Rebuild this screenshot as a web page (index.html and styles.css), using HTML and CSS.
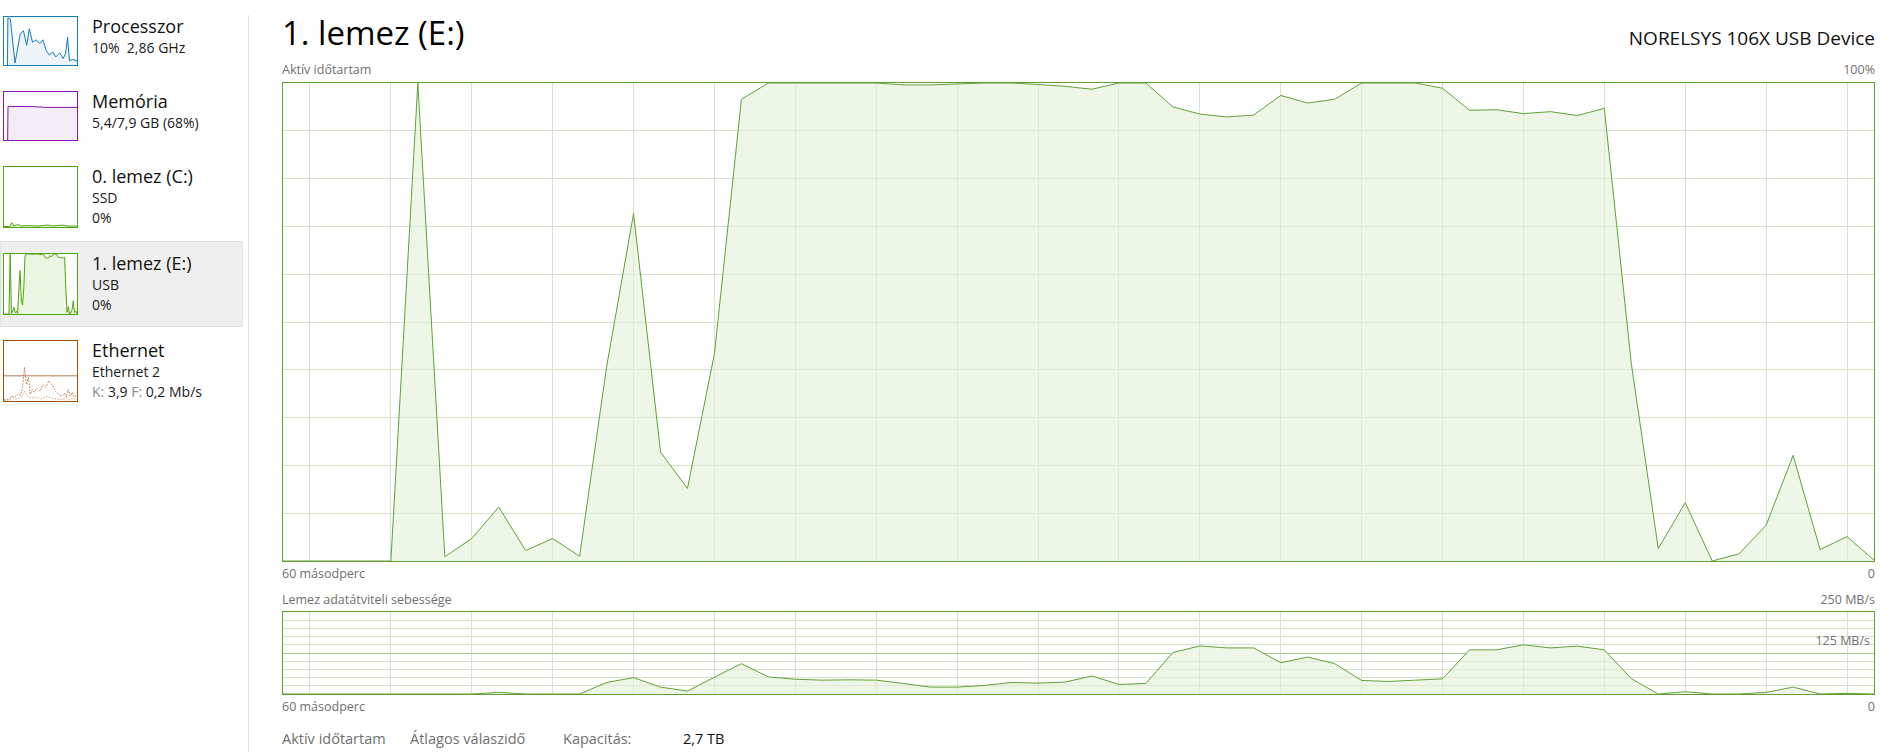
FILE: index.html
```html
<!DOCTYPE html>
<html lang="hu">
<head>
<meta charset="utf-8">
<title>Feladatkezelő – Teljesítmény</title>
<link rel="stylesheet" href="styles.css">
</head>
<body>
<div class="app">
  <nav class="side">
    <div class="item">
      <div class="thumb cpu">
        <svg viewBox="0 0 75 49" preserveAspectRatio="none">
          <polygon class="area" points="3.5,49 4,1 6.5,2 11.3,47 16.7,17 20,14 23.3,29 26,12 29.3,25.7 33.3,23.3 36.7,27.3 40,23.3 43.3,34 46.7,39 50,35.7 53.3,40.7 57.3,36.7 60.7,42.3 63.3,37.3 65.3,20.7 67.3,44.7 70.7,43.3 75,45 75,49"/>
          <polyline class="line" points="3.5,49 4,1 6.5,2 11.3,47 16.7,17 20,14 23.3,29 26,12 29.3,25.7 33.3,23.3 36.7,27.3 40,23.3 43.3,34 46.7,39 50,35.7 53.3,40.7 57.3,36.7 60.7,42.3 63.3,37.3 65.3,20.7 67.3,44.7 70.7,43.3 75,45"/>
        </svg>
      </div>
      <div class="info">
        <div class="name">Processzor</div>
        <div class="sub">10%&nbsp; 2,86 GHz</div>
      </div>
    </div>
    <div class="item">
      <div class="thumb mem">
        <svg viewBox="0 0 100 100" preserveAspectRatio="none">
          <polygon class="area" points="5,100 5.5,30 40,30.5 52,31.5 54,32 100,32 100,100"/>
          <polyline class="line" points="5,100 5.5,30 40,30.5 52,31.5 54,32 100,32"/>
        </svg>
      </div>
      <div class="info">
        <div class="name">Memória</div>
        <div class="sub">5,4/7,9 GB (68%)</div>
      </div>
    </div>
    <div class="item">
      <div class="thumb disk tall">
        <svg viewBox="0 0 75 62" preserveAspectRatio="none">
          <polygon class="area" points="0,61.5 6,61.5 8,57.5 10,61 14,59.5 18,61 25,60.5 35,61 45,60 50,61 60,60 65,61 75,61 75,62 0,62"/>
          <polyline class="line" points="0,61.5 6,61.5 8,57.5 10,61 14,59.5 18,61 25,60.5 35,61 45,60 50,61 60,60 65,61 75,61"/>
        </svg>
      </div>
      <div class="info">
        <div class="name">0. lemez (C:)</div>
        <div class="sub">SSD</div>
        <div class="sub">0%</div>
      </div>
    </div>
    <div class="item sel">
      <div class="thumb disk tall">
        <svg viewBox="0 0 59 100" preserveAspectRatio="none">
          <polygon class="area" points="0,100 1,100 2,100 3,100 4,100 5,0 6,99.1 7,95.3 8,88.7 9,97.8 10,95.3 11,99 12,59.4 13,27.3 14,77.2 15,84.8 16,56.6 17,3.4 18,0 19,0 20,0 21,0 22,0 23,0.4 24,0.4 25,0.2 26,0 27,0 28,0.3 29,0.7 30,1.3 31,0 32,0 33,5 34,6.5 35,7.1 36,6.7 37,2.6 38,4.2 39,3.4 40,0 41,0 42,0 43,1.1 44,5.7 45,5.6 46,6.4 47,6 48,6.8 49,5.3 50,58.7 51,97.4 52,87.8 53,100 54,98.5 55,92.5 56,77.9 57,97.6 58,94.9 59,99.8 59,100"/>
          <polyline class="line" points="0,100 1,100 2,100 3,100 4,100 5,0 6,99.1 7,95.3 8,88.7 9,97.8 10,95.3 11,99 12,59.4 13,27.3 14,77.2 15,84.8 16,56.6 17,3.4 18,0 19,0 20,0 21,0 22,0 23,0.4 24,0.4 25,0.2 26,0 27,0 28,0.3 29,0.7 30,1.3 31,0 32,0 33,5 34,6.5 35,7.1 36,6.7 37,2.6 38,4.2 39,3.4 40,0 41,0 42,0 43,1.1 44,5.7 45,5.6 46,6.4 47,6 48,6.8 49,5.3 50,58.7 51,97.4 52,87.8 53,100 54,98.5 55,92.5 56,77.9 57,97.6 58,94.9 59,99.8"/>
        </svg>
      </div>
      <div class="info">
        <div class="name">1. lemez (E:)</div>
        <div class="sub">USB</div>
        <div class="sub">0%</div>
      </div>
    </div>
    <div class="item">
      <div class="thumb eth tall">
        <svg viewBox="0 0 75 62" preserveAspectRatio="none">
          <path class="ref" d="M0 36H75"/>
          <polyline class="dots" points="0,61 5,60 8,57 11,58 14,55 17,56 19,48 21,27 23,45 25,38 27,55 29,50 31,53 34,49 37,52 40,45 43,48 46,41 48,44 50,46 53,52 56,55 59,57 62,54 64,58 66,50 68,57 70,53 72,58 75,56"/>
          <polyline class="dots2" points="0,61 6,61 9,59 13,60 18,58 21,52 24,57 28,59 33,58 38,60 44,57 48,59 54,60 60,61 64,59 67,61 71,59 75,61"/>
        </svg>
      </div>
      <div class="info">
        <div class="name">Ethernet</div>
        <div class="sub">Ethernet 2</div>
        <div class="sub"><span class="dim">K:</span> 3,9 <span class="dim">F:</span> 0,2 Mb/s</div>
      </div>
    </div>
  </nav>
  <div class="sep"></div>
  <main class="main">
    <header class="head">
      <h1 class="title">1. lemez (E:)</h1>
      <div class="device">NORELSYS 106X USB Device</div>
    </header>
    <div class="cap c-top"><span>Aktív időtartam</span><span>100%</span></div>
    <div class="chart big">
      <svg viewBox="0 0 59 100" preserveAspectRatio="none">
        <path class="grid" d="M1 0V100M4 0V100M7 0V100M10 0V100M13 0V100M16 0V100M19 0V100M22 0V100M25 0V100M28 0V100M31 0V100M34 0V100M37 0V100M40 0V100M43 0V100M46 0V100M49 0V100M52 0V100M55 0V100M58 0V100M0 10H59M0 20H59M0 30H59M0 40H59M0 50H59M0 60H59M0 70H59M0 80H59M0 90H59"/>
        <polygon class="area" points="0,100 1,100 2,100 3,100 4,100 5,0 6,99.1 7,95.3 8,88.7 9,97.8 10,95.3 11,99 12,59.4 13,27.3 14,77.2 15,84.8 16,56.6 17,3.4 18,0 19,0 20,0 21,0 22,0 23,0.4 24,0.4 25,0.2 26,0 27,0 28,0.3 29,0.7 30,1.3 31,0 32,0 33,5 34,6.5 35,7.1 36,6.7 37,2.6 38,4.2 39,3.4 40,0 41,0 42,0 43,1.1 44,5.7 45,5.6 46,6.4 47,6 48,6.8 49,5.3 50,58.7 51,97.4 52,87.8 53,100 54,98.5 55,92.5 56,77.9 57,97.6 58,94.9 59,99.8 59,100"/>
        <path class="grid-over" d="M1 0V100M4 0V100M7 0V100M10 0V100M13 0V100M16 0V100M19 0V100M22 0V100M25 0V100M28 0V100M31 0V100M34 0V100M37 0V100M40 0V100M43 0V100M46 0V100M49 0V100M52 0V100M55 0V100M58 0V100M0 10H59M0 20H59M0 30H59M0 40H59M0 50H59M0 60H59M0 70H59M0 80H59M0 90H59"/>
        <polyline class="line" points="0,100 1,100 2,100 3,100 4,100 5,0 6,99.1 7,95.3 8,88.7 9,97.8 10,95.3 11,99 12,59.4 13,27.3 14,77.2 15,84.8 16,56.6 17,3.4 18,0 19,0 20,0 21,0 22,0 23,0.4 24,0.4 25,0.2 26,0 27,0 28,0.3 29,0.7 30,1.3 31,0 32,0 33,5 34,6.5 35,7.1 36,6.7 37,2.6 38,4.2 39,3.4 40,0 41,0 42,0 43,1.1 44,5.7 45,5.6 46,6.4 47,6 48,6.8 49,5.3 50,58.7 51,97.4 52,87.8 53,100 54,98.5 55,92.5 56,77.9 57,97.6 58,94.9 59,99.8"/>
      </svg>
    </div>
    <div class="cap c-axis"><span>60 másodperc</span><span>0</span></div>
    <div class="cap c-title2"><span>Lemez adatátviteli sebessége</span><span>250 MB/s</span></div>
    <div class="chart small">
      <svg viewBox="0 0 59 100" preserveAspectRatio="none">
        <path class="grid" d="M1 0V100M4 0V100M7 0V100M10 0V100M13 0V100M16 0V100M19 0V100M22 0V100M25 0V100M28 0V100M31 0V100M34 0V100M37 0V100M40 0V100M43 0V100M46 0V100M49 0V100M52 0V100M55 0V100M58 0V100M0 10H59M0 20H59M0 30H59M0 40H59M0 60H59M0 70H59M0 80H59M0 90H59"/>
        <path class="mid" d="M0 50H59"/>
        <polygon class="area" points="0,100 1,100 2,100 3,100 4,100 5,100 6,100 7,100 8,98 9,100 10,100 11,100 12,86 13,80 14,91.6 15,96.4 16,79.5 17,63 18,79.2 19,82 20,83.1 21,82.7 22,83.1 23,87.1 24,91.6 25,91.6 26,89.6 27,86 28,86.7 29,85.5 30,78 31,88.4 32,87.1 33,49.4 34,41.4 35,43.8 36,43.8 37,61.8 38,55 39,63 40,83.5 41,84.7 42,83.1 43,81.5 44,46.2 45,46.2 46,40 47,43.8 48,41.6 49,46.2 50,81.2 51,100 52,97.2 53,100 54,100 55,98 56,91.6 57,100 58,99.2 59,100"/>
        <path class="grid-over" d="M1 0V100M4 0V100M7 0V100M10 0V100M13 0V100M16 0V100M19 0V100M22 0V100M25 0V100M28 0V100M31 0V100M34 0V100M37 0V100M40 0V100M43 0V100M46 0V100M49 0V100M52 0V100M55 0V100M58 0V100M0 10H59M0 20H59M0 30H59M0 40H59M0 60H59M0 70H59M0 80H59M0 90H59"/>
        <polyline class="line" points="0,100 1,100 2,100 3,100 4,100 5,100 6,100 7,100 8,98 9,100 10,100 11,100 12,86 13,80 14,91.6 15,96.4 16,79.5 17,63 18,79.2 19,82 20,83.1 21,82.7 22,83.1 23,87.1 24,91.6 25,91.6 26,89.6 27,86 28,86.7 29,85.5 30,78 31,88.4 32,87.1 33,49.4 34,41.4 35,43.8 36,43.8 37,61.8 38,55 39,63 40,83.5 41,84.7 42,83.1 43,81.5 44,46.2 45,46.2 46,40 47,43.8 48,41.6 49,46.2 50,81.2 51,100 52,97.2 53,100 54,100 55,98 56,91.6 57,100 58,99.2 59,100"/>
      </svg>
      <span class="mark">125 MB/s</span>
    </div>
    <div class="cap c-axis2"><span>60 másodperc</span><span>0</span></div>
    <div class="stats">
      <span class="s1">Aktív időtartam</span>
      <span class="s2">Átlagos válaszidő</span>
      <span class="s3">Kapacitás:</span>
      <span class="val">2,7 TB</span>
    </div>
  </main>
</div>
</body>
</html>
```

FILE: styles.css
```css
html, body {
  margin: 0;
  padding: 0;
  background: #ffffff;
}

body {
  font-family: "Open Sans", "Noto Sans", "Liberation Sans", sans-serif;
  color: #1a1a1a;
}

.app {
  display: flex;
  height: 752px;
  overflow: hidden;
}

/* ---------- sidebar ---------- */
.side {
  flex: none;
  width: 243px;
  padding: 4px 5px 0 0;
}

.item {
  display: flex;
  align-items: flex-start;
  padding: 11px 0 11px 2px;
  border: 1px solid transparent;
  margin-bottom: 1px;
}

.item.sel {
  background: #efefef;
  border-color: #e2e2e2;
}

.thumb {
  flex: none;
  width: 73px;
  height: 48px;
  border: 1px solid #888;
  background: #ffffff;
}

.thumb.tall {
  height: 60px;
}

.thumb svg {
  display: block;
  width: 100%;
  height: 100%;
}

.thumb .line,
.chart .line {
  fill: none;
  stroke-width: 1;
  stroke-linejoin: round;
  vector-effect: non-scaling-stroke;
}

.thumb.cpu { border-color: #117dbb; }
.thumb.cpu .line { stroke: #117dbb; }
.thumb.cpu .area { fill: #eef4f9; }

.thumb.mem { border-color: #8b12ae; }
.thumb.mem .line { stroke: #8b12ae; }
.thumb.mem .area { fill: #f3eef5; }

.thumb.disk { border-color: #4da60c; }
.thumb.disk .line { stroke: #4da60c; }
.thumb.disk .area { fill: #eaf5e2; }

.thumb.eth { border-color: #a74f01; }
.thumb.eth .ref {
  stroke: #b07a50;
  stroke-width: 1;
  vector-effect: non-scaling-stroke;
}
.thumb.eth .dots {
  fill: none;
  stroke: #c0703a;
  stroke-width: 1;
  stroke-dasharray: 1.5 1.5;
  vector-effect: non-scaling-stroke;
}
.thumb.eth .dots2 {
  fill: none;
  stroke: #d9a27a;
  stroke-width: 1;
  stroke-dasharray: 1.5 1.5;
  vector-effect: non-scaling-stroke;
}

.info {
  margin-left: 14px;
  margin-top: -2px;
  margin-bottom: -20px;
}

.name {
  font-size: 18px;
  line-height: 24px;
  color: #111;
}

.sub {
  font-size: 14px;
  line-height: 20px;
  color: #1a1a1a;
}

.dim {
  color: #8a8a8a;
}

.sep {
  flex: none;
  width: 1px;
  margin-top: 15px;
  background: #e4e4e4;
}

/* ---------- main ---------- */
.main {
  flex: 1;
  min-width: 0;
  display: flex;
  flex-direction: column;
  padding: 11px 17px 0 33px;
}

.head {
  display: flex;
  justify-content: space-between;
  align-items: baseline;
}

.title {
  margin: 0;
  font-size: 33px;
  line-height: 44px;
  font-weight: 400;
  color: #000;
}

.device {
  font-size: 19px;
  line-height: 24px;
  color: #111;
}

.cap {
  display: flex;
  justify-content: space-between;
  font-size: 12.5px;
  line-height: 16px;
  color: #707070;
}

.c-top { margin-top: 7px; }
.c-axis { margin-top: 4px; }
.c-title2 { margin-top: 10px; }
.c-axis2 { margin-top: 4px; }

.chart {
  position: relative;
  border: 1px solid #5f9f34;
  background: #ffffff;
}

.chart svg {
  display: block;
  width: 100%;
  height: 100%;
}

.chart.big {
  height: 478px;
  margin-top: 4px;
}

.chart.small {
  height: 82px;
  margin-top: 3px;
}

.chart .grid {
  fill: none;
  stroke: #dde6d4;
  stroke-width: 1;
  vector-effect: non-scaling-stroke;
  shape-rendering: crispEdges;
}

.chart .grid-over {
  fill: none;
  stroke: #cfe3bf;
  stroke-width: 1;
  opacity: 0.55;
  vector-effect: non-scaling-stroke;
  shape-rendering: crispEdges;
}

.chart .mid {
  fill: none;
  stroke: #a8c98c;
  stroke-width: 1;
  vector-effect: non-scaling-stroke;
  shape-rendering: crispEdges;
}

.chart .area {
  fill: #eef6e8;
}

.chart .line {
  stroke: #62a038;
}

.mark {
  position: absolute;
  right: 4px;
  top: 21px;
  font-size: 12.5px;
  line-height: 16px;
  color: #707070;
}

.stats {
  display: flex;
  margin-top: 14px;
  font-size: 14.5px;
  line-height: 20px;
  color: #707070;
}

.stats .s1 { width: 128px; }
.stats .s2 { width: 153px; }
.stats .s3 { width: 120px; }
.stats .val { color: #111; }
```
